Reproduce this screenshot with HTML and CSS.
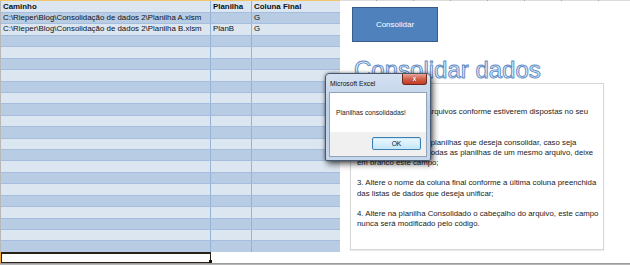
FILE: index.html
```html
<!DOCTYPE html>
<html>
    <head>
        <meta charset="UTF-8">
        <title>Consolidar dados</title>
        <link rel="stylesheet" href="styles.css">
    </head>
    <body>
        <div class="col-heads">
            <div class="col-heads-sel"></div>
            <div class="col-heads-rest"></div>
        </div>
        <div class="workspace">
            <div class="sheet">
                <div class="row head">
                    <div class="cell">Caminho</div><div class="cell">Planilha</div><div class="cell">Coluna Final</div>
                </div>
                <div class="row dark">
                    <div class="cell">C:\Rieper\Blog\Consolidação de dados 2\Planilha A.xlsm</div><div class="cell"></div><div class="cell">G</div>
                </div>
                <div class="row light">
                    <div class="cell">C:\Rieper\Blog\Consolidação de dados 2\Planilha B.xlsm</div><div class="cell">PlanB</div><div class="cell">G</div>
                </div>
                <div class="row dark"><div class="cell"></div><div class="cell"></div><div class="cell"></div></div>
                <div class="row light"><div class="cell"></div><div class="cell"></div><div class="cell"></div></div>
                <div class="row dark"><div class="cell"></div><div class="cell"></div><div class="cell"></div></div>
                <div class="row light"><div class="cell"></div><div class="cell"></div><div class="cell"></div></div>
                <div class="row dark"><div class="cell"></div><div class="cell"></div><div class="cell"></div></div>
                <div class="row light"><div class="cell"></div><div class="cell"></div><div class="cell"></div></div>
                <div class="row dark"><div class="cell"></div><div class="cell"></div><div class="cell"></div></div>
                <div class="row light"><div class="cell"></div><div class="cell"></div><div class="cell"></div></div>
                <div class="row dark"><div class="cell"></div><div class="cell"></div><div class="cell"></div></div>
                <div class="row light"><div class="cell"></div><div class="cell"></div><div class="cell"></div></div>
                <div class="row dark"><div class="cell"></div><div class="cell"></div><div class="cell"></div></div>
                <div class="row light"><div class="cell"></div><div class="cell"></div><div class="cell"></div></div>
                <div class="row dark"><div class="cell"></div><div class="cell"></div><div class="cell"></div></div>
                <div class="row light"><div class="cell"></div><div class="cell"></div><div class="cell"></div></div>
                <div class="row dark"><div class="cell"></div><div class="cell"></div><div class="cell"></div></div>
                <div class="row light"><div class="cell"></div><div class="cell"></div><div class="cell"></div></div>
                <div class="row dark"><div class="cell"></div><div class="cell"></div><div class="cell"></div></div>
                <div class="row light"><div class="cell"></div><div class="cell"></div><div class="cell"></div></div>
                <div class="row dark"><div class="cell"></div><div class="cell"></div><div class="cell"></div></div>
                <div class="row active"><div class="active-cell"></div></div>
            </div>
            <div class="pane">
                <button class="run">Consolidar</button>
                <h1 class="title">Consolidar dados</h1>
                <div class="notes">
                    <p>1. Altere o local dos arquivos conforme estiverem dispostas no seu computador;</p>
                    <p>2. Altere o nome das planilhas que deseja consolidar, caso seja necessário escolher todas as planilhas de um mesmo arquivo, deixe em branco este campo;</p>
                    <p>3. Altere o nome da coluna final conforme a última coluna preenchida das listas de dados que deseja unificar;</p>
                    <p>4. Altere na planilha Consolidado o cabeçalho do arquivo, este campo nunca será modificado pelo código.</p>
                </div>
            </div>
        </div>
        <div class="status"></div>

        <div class="msgbox">
            <div class="msgbox-title">
                <span>Microsoft Excel</span>
                <span class="msgbox-close">x</span>
            </div>
            <div class="msgbox-body">Planilhas consolidadas!</div>
            <div class="msgbox-foot">
                <button class="msgbox-ok">OK</button>
            </div>
        </div>
    </body>
</html>
```

FILE: styles.css
```css
html {
    height: 100%;
}
body {
    margin: 0;
    height: 265px;
    overflow: hidden;
    background: white;
    font-family: "Liberation Sans", Arial, sans-serif;
    color: #111;
    display: flex;
    flex-direction: column;
}

/* column header edge along the top */
.col-heads {
    display: flex;
    height: 1px;
}
.col-heads-sel {
    width: 340px;
    background: #f3c46a;
}
.col-heads-rest {
    flex: 1;
    background: repeating-linear-gradient(to right, #dcdcdc 0, #dcdcdc 36px, #a8a8a8 36px, #a8a8a8 37px);
}

.workspace {
    display: flex;
    height: 262px;
}

/* the table */
.sheet {
    width: 339px;
    border-left: 1px solid #b8b8b8;
    display: grid;
    grid-template-rows: 11px repeat(21, 11.43px) 11px;
}
.row {
    display: grid;
    grid-template-columns: 210px 41px 1fr;
    box-sizing: border-box;
    border-top: 1px solid #a6bedd;
    font-size: 7.9px;
    line-height: 10px;
}
.row.head {
    border-top: none;
    background: #dce6f1;
    font-weight: bold;
    line-height: 11px;
}
.row.dark {
    background: #b8cce4;
}
.row.light {
    background: #dce6f1;
}
.cell {
    padding-left: 2px;
    white-space: nowrap;
    overflow: hidden;
}
.cell:nth-child(1), .cell:nth-child(2) {
    border-right: 1px solid #95b3d7;
}
.row.active {
    display: block;
    border-top: none;
    background: white;
    position: relative;
}
.row.active::before {
    content: "";
    position: absolute;
    left: -1px;
    top: 0;
    bottom: 0;
    width: 1px;
    background: #f0a830;
}
.active-cell {
    width: 210px;
    height: 11px;
    box-sizing: border-box;
    border: 1px solid #2a2015;
    border-top-width: 2px;
    position: relative;
}
.active-cell::after {
    content: "";
    position: absolute;
    right: -2px;
    bottom: -1px;
    width: 3px;
    height: 3px;
    background: #111;
}

/* right side */
.pane {
    flex: 1;
    display: flex;
    flex-direction: column;
    align-items: flex-start;
}
.run {
    margin: 6px 0 0 12px;
    width: 86px;
    height: 35px;
    background: #4f81bd;
    border: 1px solid #385d8a;
    color: white;
    font-family: "Liberation Sans", Arial, sans-serif;
    font-size: 8px;
    padding: 0;
}
.title {
    margin: 16px 0 0 14px;
    font-size: 24px;
    line-height: 24px;
    font-weight: normal;
    color: #e6eef8;
    -webkit-text-stroke: 0.9px #5f8cc6;
    text-shadow: 0 0 1px rgba(79, 129, 189, .35);
}
.notes {
    margin: 1px 0 0 10px;
    width: 254px;
    height: 167px;
    box-sizing: border-box;
    border: 1px solid #d6d6d6;
    box-shadow: 0 1px 1px rgba(0, 0, 0, .08);
    padding: 23px 4px 0 6px;
    font-size: 7.8px;
    line-height: 10.2px;
    color: #222;
}
.notes p {
    margin: 0 0 10.2px 0;
}

.status {
    height: 2px;
    background: linear-gradient(#8e8e8e, #c4c4c4);
}

/* message box over the sheet */
.msgbox {
    position: absolute;
    left: 325px;
    top: 73px;
    width: 106px;
    height: 88px;
    box-sizing: border-box;
    border: 1px solid #47596f;
    border-radius: 4px 4px 2px 2px;
    background: linear-gradient(#d3e1f1, #bcd0e8 40%, #c6d7ec);
    box-shadow: 2px 3px 6px rgba(0, 0, 0, .65), 0 0 3px rgba(0, 0, 0, .4);
    padding: 0 3px 3px 3px;
    display: flex;
    flex-direction: column;
    font-size: 6.7px;
}
.msgbox-title {
    height: 18px;
    display: flex;
    align-items: center;
    justify-content: space-between;
    padding-left: 1px;
    color: #111;
}
.msgbox-close {
    align-self: flex-start;
    width: 25px;
    height: 11px;
    box-sizing: border-box;
    border: 1px solid #6e2a1f;
    border-top: none;
    border-radius: 0 0 3px 3px;
    background: linear-gradient(#eaa597, #d0604a 50%, #c13d25);
    color: white;
    font-weight: bold;
    font-size: 7px;
    line-height: 9px;
    text-align: center;
    text-shadow: 0 0 1px #5a1a10;
}
.msgbox-body {
    height: 40px;
    background: white;
    border: 1px solid #91a4bb;
    border-bottom: none;
    box-sizing: border-box;
    display: flex;
    align-items: center;
    padding-left: 6px;
    color: #222;
}
.msgbox-foot {
    flex: 1;
    background: #f0f0f0;
    border: 1px solid #91a4bb;
    border-top: none;
    display: flex;
    justify-content: flex-end;
    align-items: flex-start;
    padding: 5px 5px 0 0;
}
.msgbox-ok {
    width: 49px;
    height: 13px;
    padding: 0;
    border: 1px solid #3c7fb1;
    border-radius: 2px;
    background: linear-gradient(#eaf6fd, #d9f0fc 50%, #bee6fd);
    box-shadow: inset 0 0 0 1px #cbe9fb;
    font-family: "Liberation Sans", Arial, sans-serif;
    font-size: 6.7px;
    color: #111;
}
```
